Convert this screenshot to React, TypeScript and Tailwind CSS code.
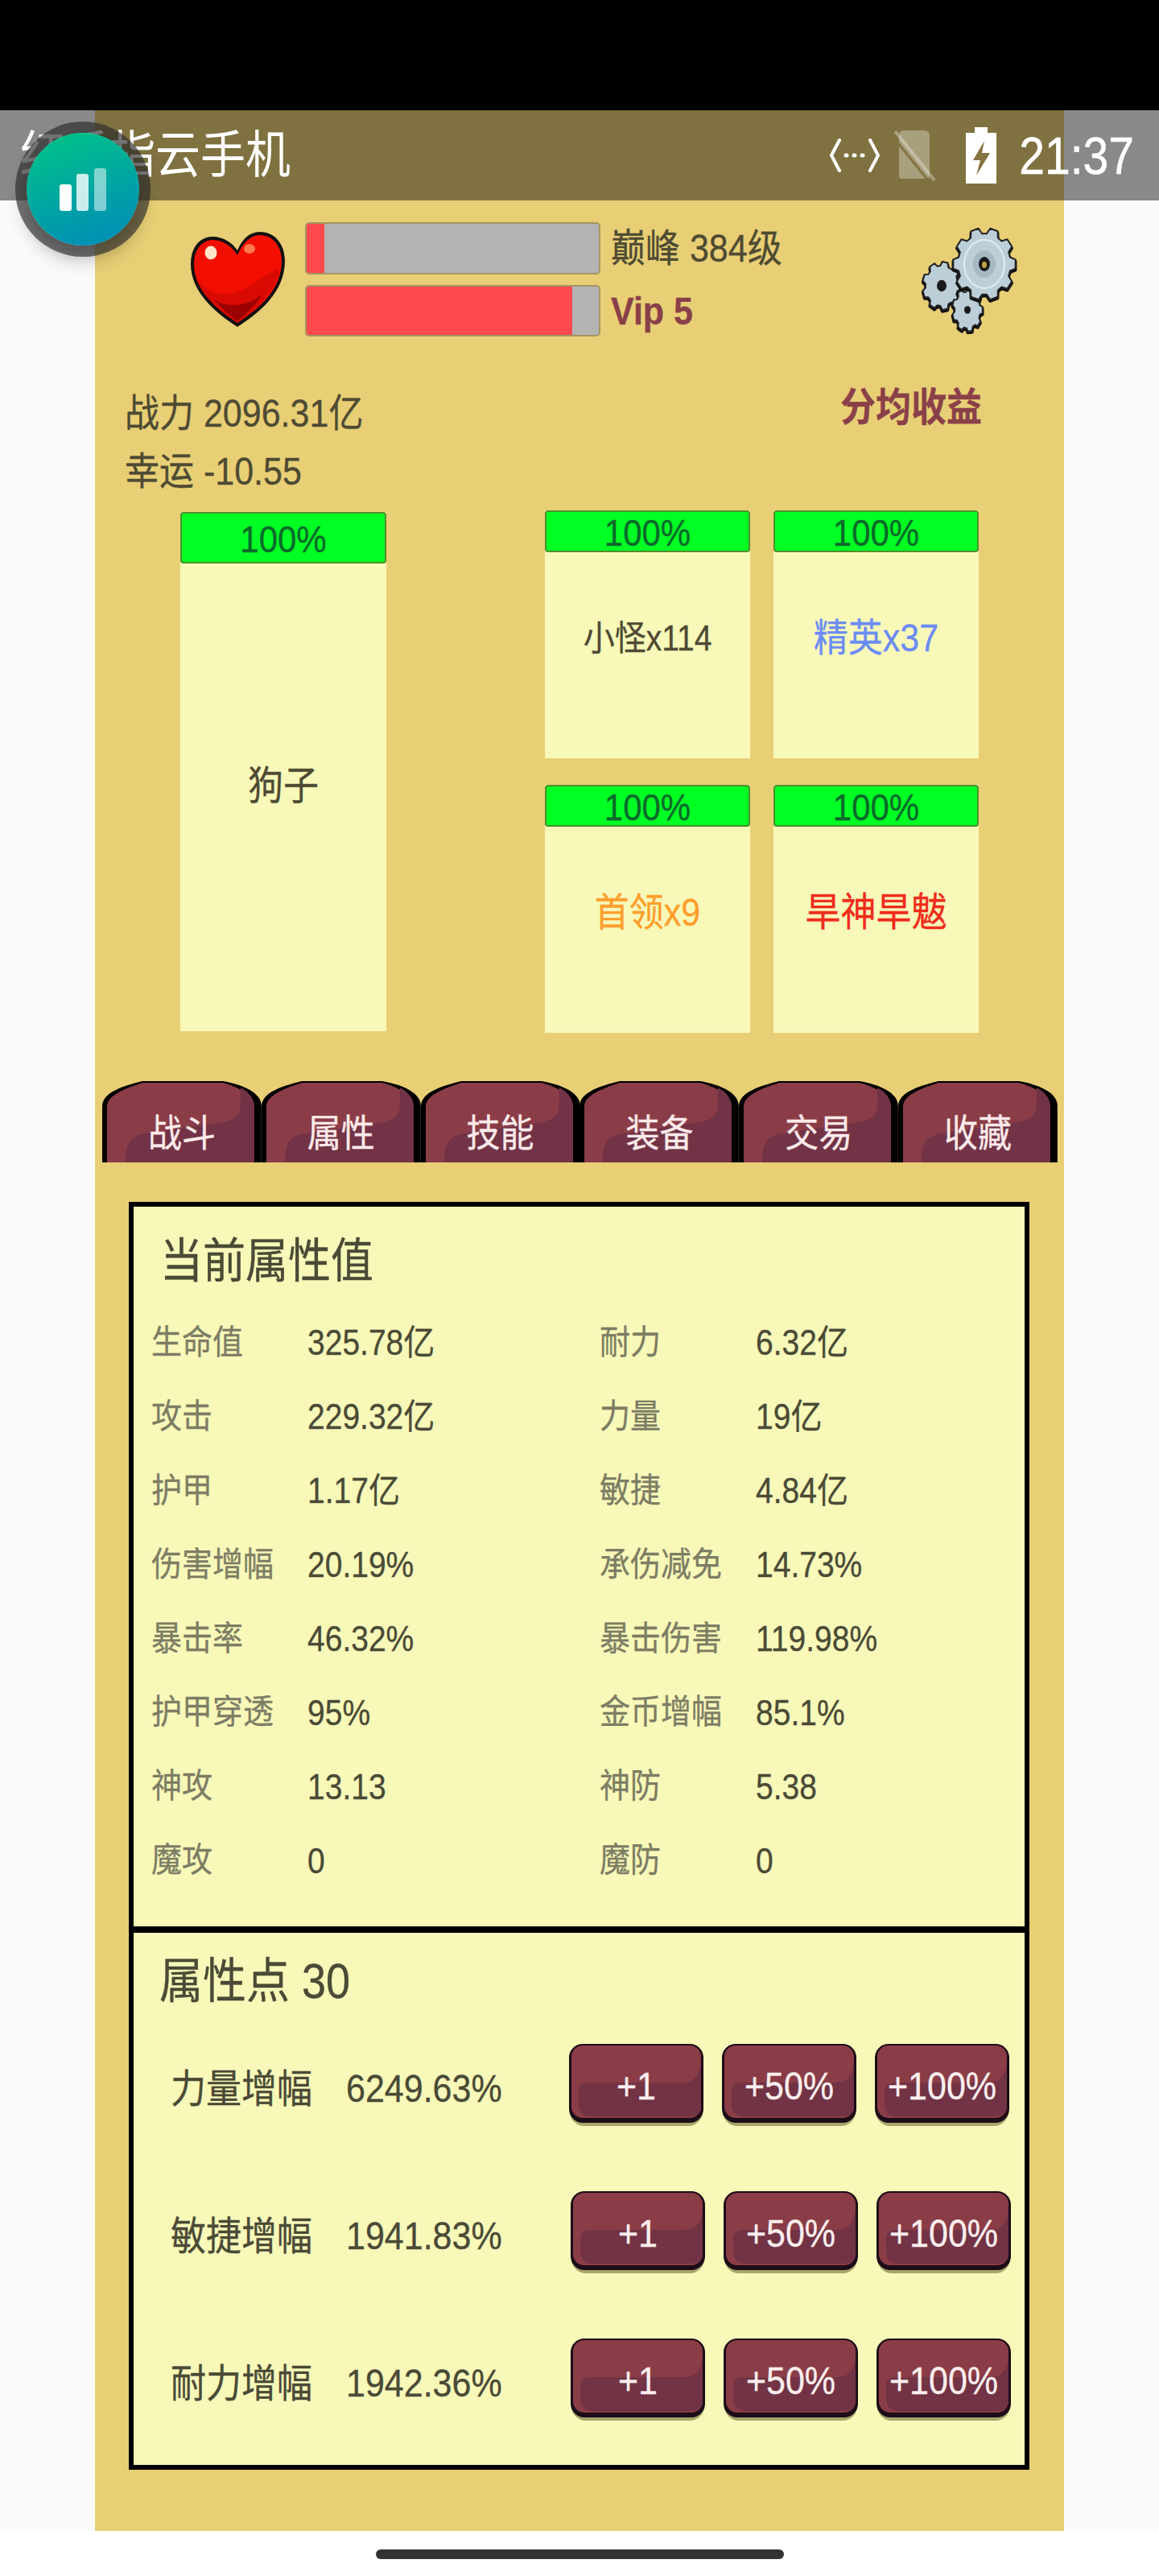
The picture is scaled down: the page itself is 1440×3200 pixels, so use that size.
import { ReactNode } from 'react'

// text in the game canvas is a bit taller than wide, and a little heavier
const tall = 'inline-block scale-y-[1.12] [-webkit-text-stroke:0.3px]'

const stats = [
  ['生命值', '325.78亿', '耐力', '6.32亿'],
  ['攻击', '229.32亿', '力量', '19亿'],
  ['护甲', '1.17亿', '敏捷', '4.84亿'],
  ['伤害增幅', '20.19%', '承伤减免', '14.73%'],
  ['暴击率', '46.32%', '暴击伤害', '119.98%'],
  ['护甲穿透', '95%', '金币增幅', '85.1%'],
  ['神攻', '13.13', '神防', '5.38'],
  ['魔攻', '0', '魔防', '0'],
]

const upgrades = [
  { name: '力量增幅', value: '6249.63%', right: 'pr-[19px]' },
  { name: '敏捷增幅', value: '1941.83%', right: 'pr-[17px]' },
  { name: '耐力增幅', value: '1942.36%', right: 'pr-[17px]' },
]

const tabs = ['战斗', '属性', '技能', '装备', '交易', '收藏']

function gearPath(cx: number, cy: number, rx: number, ry: number, teeth: number) {
  const pts: string[] = []
  const step = (Math.PI * 2) / teeth
  for (let i = 0; i < teeth; i++) {
    const a = i * step
    const add = (off: number, k: number) => {
      const x = cx + Math.cos(a + off * step) * rx * k
      const y = cy + Math.sin(a + off * step) * ry * k
      pts.push(`${x.toFixed(1)} ${y.toFixed(1)}`)
    }
    add(-0.36, 0.84)
    add(-0.2, 1)
    add(0.2, 1)
    add(0.36, 0.84)
  }
  return 'M' + pts.join('L') + 'Z'
}

function Gears() {
  const gears = [
    { cx: 25, cy: 75, rx: 24, ry: 30, n: 9, hole: 6 },
    { cx: 57, cy: 105, rx: 19, ry: 27, n: 9, hole: 4 },
    { cx: 78, cy: 48, rx: 39, ry: 45, n: 10, hole: 7 },
  ]
  return (
    <svg width="119" height="135" viewBox="0 0 119 135">
      {gears.map((g) => (
        <g key={g.cx}>
          <path d={gearPath(g.cx, g.cy + 2, g.rx, g.ry, g.n)} fill="#111" stroke="#111" strokeWidth="3.5" strokeLinejoin="round" />
          <path d={gearPath(g.cx, g.cy, g.rx, g.ry, g.n)} fill="#bccfd8" stroke="#222" strokeWidth="2" strokeLinejoin="round" />
          <ellipse cx={g.cx} cy={g.cy} rx={g.hole} ry={g.hole * 1.2} fill="#1a1a1a" />
        </g>
      ))}
      <ellipse cx="78" cy="48" rx="25" ry="30" fill="none" stroke="#e4ecee" strokeWidth="2" />
      <ellipse cx="78" cy="48" rx="14" ry="17" fill="#a6bac3" />
      <ellipse cx="78" cy="48" rx="7" ry="9" fill="#1a1a1a" />
      <ellipse cx="78" cy="49" rx="3" ry="4" fill="#c7a14a" />
    </svg>
  )
}

function Heart() {
  return (
    <svg width="118" height="119" viewBox="0 0 118 119">
      <path
        d="M59 118C34 102 1 76 1 40C1 17 14 6 28 6C42 6 53 14 59 23C65 9 74 0 87 0C105 0 118 15 118 36C118 76 84 102 59 118Z"
        fill="#111"
      />
      <path
        d="M59 113C36 98 5 74 5 40C5 20 17 10 28 10C42 10 53 19 59 29C65 14 75 4 87 4C103 4 114 18 114 36C114 74 82 98 59 113Z"
        fill="#f20f02"
      />
      <path d="M59 113C40 100 16 82 9 60C26 80 48 82 70 70C88 60 100 48 111 46C106 76 80 99 59 113Z" fill="#d80a02" />
      <path d="M59 111C49 103 38 94 30 84C45 95 74 93 90 77C83 90 71 101 59 111Z" fill="#9c0202" />
      <ellipse cx="26" cy="26" rx="7.5" ry="8.5" fill="#ffe6c8" />
      <ellipse cx="74" cy="21" rx="7" ry="6" fill="#ff7a50" />
    </svg>
  )
}

function TabSkin() {
  return (
    <svg className="absolute inset-0 w-full h-full" viewBox="0 0 198 102" preserveAspectRatio="none">
      <path d="M0 102V32C0 14 30 6 50 1H150C172 5 198 14 198 32V102Z" fill="#000" />
      <path d="M6 102V32C6 18 32 9 50 3H150C168 8 189 18 189 32V102Z" fill="#8a3d47" />
      <path d="M172 9C179 13 189 20 189 32V102H29C29 76 36 69 54 66L150 52C164 49 172 44 172 30Z" fill="#723347" />
    </svg>
  )
}

function ButtonSkin() {
  return (
    <svg className="absolute inset-0 w-full h-full" viewBox="0 0 167 102" preserveAspectRatio="none">
      <rect x="1" y="4" width="165" height="98" rx="18" fill="#a8a56c" />
      <rect x="0" y="0" width="167" height="98" rx="17" fill="#1c0d18" />
      <rect x="3" y="2" width="161" height="90" rx="14" fill="#8a3d46" />
      <path d="M164 22V78C164 86 158 90 150 90H24C16 88 12 84 12 74V58C12 52 16 48 24 48H140C156 48 162 40 164 22Z" fill="#723345" />
    </svg>
  )
}

function HpBar({ height, textClass }: { height: string; textClass: string }) {
  return (
    <div className={`${height} shrink-0 flex items-center justify-center rounded-[4px] border-2 border-[#4f8f2a] bg-[#00ff22] text-[42px] leading-none text-[#0b6a2a] ${textClass}`}>
      <span className={tall}>100%</span>
    </div>
  )
}

function EnemyCard({ hp, className, bodyClass, textClass, children }: { hp: string; className: string; bodyClass: string; textClass: string; children: ReactNode }) {
  return (
    <div className={`flex flex-col bg-[#f8f9b9] ${className}`}>
      <HpBar height={hp} textClass={textClass} />
      <div className={`flex-1 flex items-center justify-center leading-none ${bodyClass}`}>{children}</div>
    </div>
  )
}

function StatusIcons() {
  return (
    <div className="flex items-center">
      <svg width="62" height="44" viewBox="0 0 62 44" fill="none" stroke="#fff" strokeWidth="4" strokeLinecap="round">
        <path d="M12 3L2 22L12 41" />
        <path d="M50 3L60 22L50 41" />
        <path d="M20 22H21M30 22H31M40 22H41" strokeWidth="5" />
      </svg>
      <svg className="ml-[18px]" width="52" height="66" viewBox="0 0 52 66">
        <path d="M6 8Q6 2 12 2H36Q44 2 44 8V58Q44 62 40 62H10Q6 62 6 58Z" fill="#fff" fillOpacity="0.32" />
        <path d="M1 3L50 64" stroke="#fff" strokeOpacity="0.32" strokeWidth="4" />
        <path d="M-3 8L42 64" stroke="#857440" strokeWidth="3" />
      </svg>
      <svg className="ml-[36px]" width="40" height="70" viewBox="0 0 40 70">
        <path d="M12 0H28V7H39V70H1V7H12Z" fill="#fff" />
        <path d="M24 17L10 41H19L14 60L31 32H21Z" fill="#857440" />
      </svg>
      <span className="ml-[27px] inline-block scale-y-[1.15] text-[57px] leading-none text-white [-webkit-text-stroke:0.5px]">21:37</span>
    </div>
  )
}

export default function App() {
  return (
    <div className="relative w-[1440px] h-[3200px] overflow-hidden bg-white font-['Liberation_Sans','Noto_Sans_CJK_SC',sans-serif]">
      <div className="h-[137px] bg-black" />

      <div className="bg-[#fafafa] px-[118px]">
        <main className="h-[3007px] pt-[112px] bg-[#e8cf75]">
          {/* head row */}
          <div className="flex h-[142px] mt-[27px] pl-[118px] pr-[58px]">
            <div className="pt-[12px] shrink-0">
              <Heart />
            </div>
            <div className="ml-[25px] flex flex-col gap-[13px]">
              <div className="flex items-center h-[65px]">
                <div className="w-[367px] h-full rounded-[5px] border-2 border-[#a49660] bg-[#b3b3b3] overflow-hidden">
                  <div className="w-[6%] h-full bg-[#ff4a4d]" />
                </div>
                <span className={`ml-[13px] text-[43px] leading-none text-[#4e4a33] ${tall}`}>巅峰 384级</span>
              </div>
              <div className="flex items-center h-[64px]">
                <div className="w-[367px] h-full rounded-[5px] border-2 border-[#a49660] bg-[#b3b3b3] overflow-hidden">
                  <div className="w-[91%] h-full bg-[#ff4a4d]" />
                </div>
                <span className={`ml-[13px] text-[43px] leading-none font-bold text-[#8a4048] ${tall}`}>Vip 5</span>
              </div>
            </div>
            <div className="ml-auto pt-[4px]">
              <Gears />
            </div>
          </div>

          {/* power, luck */}
          <div className="flex justify-between mt-[59px] pl-[37px] pr-[102px]">
            <div className="text-[43px] leading-[72px] text-[#4e4a33]">
              <div><span className={tall}>战力 2096.31亿</span></div>
              <div><span className={tall}>幸运 -10.55</span></div>
            </div>
            <div className="text-[44px] leading-[58px] font-bold text-[#8a4048]">
              <span className={tall}>分均收益</span>
            </div>
          </div>

          {/* enemies */}
          <div className="flex mt-[13px] ml-[106px]">
            <EnemyCard hp="h-[64px]" className="w-[256px] h-[645px] mt-[2px]" bodyClass="pb-[30px]" textClass="pt-[3px]">
              <span className={`text-[44px] text-[#4e4a33] ${tall}`}>狗子</span>
            </EnemyCard>
            <div className="ml-[197px] grid grid-cols-[255px_255px] gap-x-[29px] gap-y-[33px]">
              <EnemyCard hp="h-[52px]" className="h-[308px]" bodyClass="pb-[44px]" textClass="pt-[4px]">
                <span className={`text-[39px] text-[#4e4a33] ${tall}`}>小怪x114</span>
              </EnemyCard>
              <EnemyCard hp="h-[52px]" className="h-[308px]" bodyClass="pb-[44px]" textClass="pt-[4px]">
                <span className={`text-[43px] text-[#6b8cf5] ${tall}`}>精英x37</span>
              </EnemyCard>
              <EnemyCard hp="h-[52px]" className="h-[308px]" bodyClass="pb-[44px]" textClass="pt-[4px]">
                <span className={`text-[43px] text-[#ff9e2c] ${tall}`}>首领x9</span>
              </EnemyCard>
              <EnemyCard hp="h-[52px]" className="h-[308px]" bodyClass="pb-[44px]" textClass="pt-[4px]">
                <span className={`text-[44px] text-[#ef2b1c] ${tall}`}>旱神旱魃</span>
              </EnemyCard>
            </div>
          </div>

          {/* tabs */}
          <div className="flex mt-[59px] ml-[9px] w-[1187px]">
            {tabs.map((t) => (
              <div key={t} className="relative flex-1 h-[102px] flex justify-center pt-[46px]">
                <TabSkin />
                <span className={`relative text-[42px] leading-none text-[#fdeaea] ${tall}`}>{t}</span>
              </div>
            ))}
          </div>

          {/* attribute panel */}
          <div className="mt-[49px] ml-[42px] w-[1119px] h-[1575px] border-[6px] border-black bg-[#f8f9b9]">
            <section className="pt-[38px] pb-[36px] border-b-[8px] border-black">
              <h2 className={`ml-[33px] text-[53px] leading-[60px] text-[#4a4a36] ${tall}`}>当前属性值</h2>
              <div className="mt-[24px] ml-[22px]">
                {stats.map(([a, b, c, d]) => (
                  <div key={a} className="grid grid-cols-[557px_1fr] h-[92px] items-center text-[39px] leading-none">
                    <div className="flex">
                      <span className={`w-[194px] text-[38px] text-[#7d7d64] ${tall}`}>{a}</span>
                      <span className={`text-[#4a4a36] ${tall}`}>{b}</span>
                    </div>
                    <div className="flex">
                      <span className={`w-[194px] text-[38px] text-[#7d7d64] ${tall}`}>{c}</span>
                      <span className={`text-[#4a4a36] ${tall}`}>{d}</span>
                    </div>
                  </div>
                ))}
              </div>
            </section>

            <section className="pt-[30px]">
              <h2 className={`ml-[32px] text-[54px] leading-[60px] text-[#4a4a36] ${tall}`}>属性点 30</h2>
              <div className="mt-[48px] flex flex-col gap-[81px]">
                {upgrades.map((u) => (
                  <div key={u.name} className={`flex items-center h-[102px] pl-[46px] ${u.right}`}>
                    <span className={`w-[218px] pt-[9px] text-[44px] leading-none text-[#4a4a36] ${tall}`}>{u.name}</span>
                    <span className={`pt-[9px] text-[43px] leading-none text-[#4a4a36] ${tall}`}>{u.value}</span>
                    <div className="ml-auto flex gap-[23px]">
                      {['+1', '+50%', '+100%'].map((b) => (
                        <button key={b} className="relative w-[167px] h-[102px] pt-[2px] text-[43px] leading-none text-[#fbeeee]">
                          <ButtonSkin />
                          <span className={`relative ${tall}`}>{b}</span>
                        </button>
                      ))}
                    </div>
                  </div>
                ))}
              </div>
            </section>
          </div>
        </main>
      </div>

      {/* nav bar */}
      <div className="flex justify-center pt-[23px]">
        <div className="w-[507px] h-[12px] rounded-full bg-[#333333]" />
      </div>

      {/* translucent status bar over the page */}
      <div className="absolute left-0 right-0 top-[137px] h-[112px] bg-black/45 flex items-center justify-between pl-[25px] pr-[31px]">
        <span className="text-[56px] leading-none text-white scale-y-[1.12] inline-block">红手指云手机</span>
        <StatusIcons />
      </div>

      {/* floating button */}
      <div className="absolute left-[33px] top-[165px] w-[140px] h-[140px] rounded-full bg-linear-[160deg] from-[#00c585] to-[#0089bb] ring-[14px] ring-[#2a2a2a]/65 shadow-[0_14px_24px_rgba(0,0,0,0.35)] flex items-center justify-center">
        <svg width="58" height="53" viewBox="0 0 58 53">
          <rect x="0" y="20" width="15" height="33" rx="3" fill="#fff" />
          <rect x="21" y="7" width="15" height="46" rx="3" fill="#fff" fillOpacity="0.8" />
          <rect x="43" y="0" width="15" height="53" rx="3" fill="#fff" fillOpacity="0.5" />
        </svg>
      </div>
    </div>
  )
}
